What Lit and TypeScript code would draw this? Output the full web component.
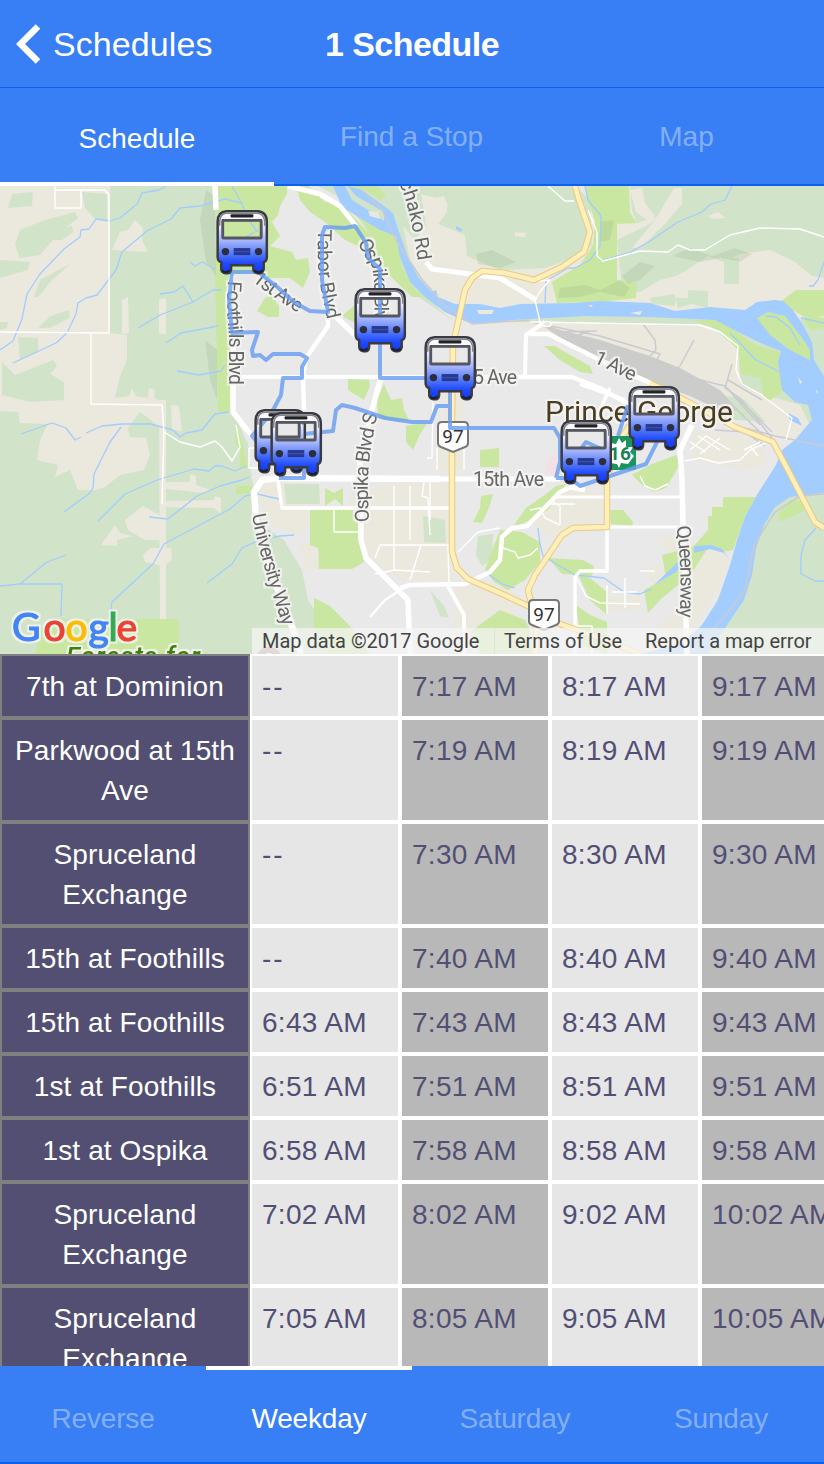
import { LitElement, html, svg, css } from 'lit';
import { customElement, property } from 'lit/decorators.js';
import { classMap } from 'lit/directives/class-map.js';

// Map geometry. All shapes share one coordinate space (y starts at 186).
const BEIGE = [
  '0,186 110,186 110,333 127,335 127,360 120,376 115,398 129,396 132,388 136,396 148,398 149,388 155,390 154,398 164,404 164,430 140,412 128,428 130,437 146,438 150,455 144,470 120,475 105,487 95,490 78,490 70,470 55,477 58,465 37,460 40,440 48,424 20,423 18,412 0,424',
  '112,250 120,232 128,230 135,220 143,228 142,240 148,252',
  '76,312 97,304 102,309 90,322 76,327',
  '122,300 128,297 129,333 122,334', '159,299 166,298 166,334 159,334',
  '159,400 166,400 166,619 160,619',
  '166,482 190,482 190,474 196,476 196,485 210,490 205,493 166,489',
  '166,501 214,500 215,496 221,498 221,514 214,508 166,507',
  '125,520 143,506 160,515 160,540 145,540 128,530',
  '101,545 115,525 120,533 133,536 117,540 117,546',
  '143,555 150,548 171,548 172,560 164,566 145,562',
  '171,405 179,406 182,431 172,430',
  '395,186 824,186 824,320 440,310 410,260',
];
const FOREST = [
  '0,260 30,262 28,270 0,278', '15,245 20,230 45,220 75,212 78,218 60,232 40,255 20,258',
  '12,194 33,192 32,206 8,208', '82,192 107,194 107,222 95,219 85,208',
  '46,240 60,228 72,226 73,232 62,240', '18,337 38,338 38,352 20,360', '0,322 8,322 7,328 0,330',
  '2,362 15,375 53,360 57,366 50,374 64,382 64,400 30,402 2,395',
  '38,328 50,316 69,310 70,318 50,328', '34,297 40,280 70,264 52,280 38,297', '0,411 18,412 15,424 0,424',
  '418,186 575,186 590,200 592,245 580,256 545,268 500,270 467,256 465,235 438,224 447,212 446,200 420,194',
  '375,186 420,186 426,225 415,240 402,225 390,200',
  '630,186 824,186 824,278 812,276 795,262 770,250 740,254 724,262 708,256 690,268 676,276 660,280 640,292 622,288 617,240 650,224 680,198 674,194 660,216 637,223 632,210',
  '724,258 739,258 739,284 724,284', '688,290 708,291 708,308 692,304 678,308 675,298 688,298', '650,298 675,294 675,306 652,304',
];
const BEIGE_OVER = [
  '630,190 642,188 645,203 655,216 650,222 636,212', '674,188 682,188 682,204 665,224 640,248 632,248 655,220',
  '708,216 718,212 726,218 712,219', '515,232 527,233 524,237 515,236', '420,202 444,196 448,206 440,212',
];
const URBAN = '233,272 262,230 272,220 280,186 318,186 345,200 368,232 395,270 420,298 455,322 530,323 600,350 680,390 735,420 810,425 778,465 760,490 742,515 735,560 715,605 700,630 680,645 650,654 345,654 325,625 308,600 302,570 284,540 262,525 252,480 248,444 233,412';
const URBAN_BEIGE = [
  '440,310 470,322 530,322 640,325 710,326 740,350 740,385 765,395 800,405 810,425 795,440 783,440 745,400 680,385 620,360 560,335 500,323 455,322',
  '254,478 300,482 302,508 350,508 350,488 372,490 400,480 456,482 454,640 490,654 520,600 510,586 480,584 400,580 364,556 362,510 312,510 309,525 298,535 284,530 272,525 258,500',
  '297,545 312,543 319,569 302,570 304,558',
  '560,482 590,490 606,500 606,520 585,525 562,540 548,535 530,520',
  '690,430 730,434 762,445 768,465 742,470 690,460',
  '600,598 640,594 640,610 605,612', '645,566 660,566 670,572 652,582 642,570', '690,560 715,550 730,540 728,570 700,620 660,654 640,654 680,600',
  '460,600 480,604 500,612 480,625 464,622', '445,388 464,388 464,470 436,470 434,452 445,440',
  '658,540 674,535 700,545 722,552 720,580 706,600 695,570 675,560',
];
const PARK = [
  '217,186 287,186 287,194 280,206 278,215 272,222 280,236 270,246 292,252 296,260 308,258 310,272 303,288 290,278 268,278 258,272 215,274',
  '215,273 233,276 232,412 218,412', '257,311 265,298 271,295 279,306 279,317 268,317',
  '296,186 308,186 325,202 340,202 351,214 368,232 385,252 400,272 421,297 412,297 390,276 370,252 358,246 345,240 325,222 310,212 300,200',
  '344,196 358,210 380,224 396,236 402,266 412,286 426,300 405,284 385,254 364,224 348,208', '346,186 378,186 386,196 380,200 365,190',
  '585,186 629,186 630,213 637,223 617,224 617,280 637,283 636,298 600,302 557,303 552,282 580,265 593,245 595,220 587,200',
  '342,316 356,304 360,308 357,324', '348,379 369,380 370,386 364,400 348,390',
  '377,400 384,384 391,400 402,398 404,410 409,420 400,422 378,418', '406,426 428,422 420,434 413,450 406,442',
  '480,450 499,448 499,467 480,467', '481,496 493,494 490,505 482,523 473,522 480,508',
  '310,510 362,510 362,548 364,562 352,569 319,569 318,548 310,545', '325,488 334,493 343,488 343,506 335,499 325,506',
  '314,598 330,606 350,626 370,654 330,654 314,625', '544,346 555,346 565,352 590,366 593,374 580,372 560,360',
  '556,486 566,484 548,510 535,518 512,528 526,508 546,494',
  '500,530 522,532 540,542 540,562 525,580 508,590 494,582 485,570 494,545', '548,558 583,560 594,566 592,576 562,574',
  '610,510 623,510 633,522 632,526 611,524', '632,475 652,464 676,455 680,464 666,488 654,492 642,485',
  '723,497 755,497 742,524 733,550 722,552 708,548 690,575 660,600 648,613 644,590 666,578 662,555 693,547 708,530 708,516 712,516 712,507 723,507',
  '578,574 590,578 607,592 607,615 590,600', '576,605 590,615 607,622 607,654 582,646',
  '692,320 720,320 755,345 780,352 778,365 786,390 770,400 764,398 760,378 740,374 738,350 720,330',
  '780,302 796,290 824,290 824,316 806,318',
  '236,420 242,442 248,468 240,468 240,448 235,444', '236,486 252,486 252,494 236,494',
  '40,628 60,619 179,619 179,654 36,654', '778,515 790,500 810,502 802,512 780,522', '500,610 525,620 530,630 532,654 480,654 470,632',
];
const WATER = [
  '348,186 362,190 380,203 393,213 399,232 408,257 418,277 432,292 436,290 438,297 455,304 480,304 500,308 520,304 575,303 600,301 650,303 675,311 710,307 745,310 757,302 775,300 783,301 793,310 803,325 812,342 814,360 824,376 824,493 790,497 775,507 764,525 756,548 752,575 744,600 725,628 708,654 640,654 682,644 702,625 718,600 730,565 737,540 746,515 760,490 776,465 782,450 795,440 805,428 812,420 808,405 795,402 782,390 778,362 781,351 765,345 738,332 715,320 650,317 585,316 512,320 480,324 467,322 445,312 425,297 410,282 400,257 396,236 380,230 360,218 342,207 333,186 345,186 352,200 370,211 384,221 384,212 370,204 356,196',
  '694,546 711,545 722,549 730,560 724,553 710,549 694,553', '678,562 690,552 690,560 676,572 654,585',
  '456,226 462,229 461,232 456,229', '788,413 798,418 802,426 790,420',
];
const ISLANDS = ['757,318 768,312 785,316 800,335 810,350 810,360 790,350 770,335', '802,314 824,318 824,328 810,330'];
const SANDBARS = ['368,211 378,212 380,219 370,216', '477,310 494,310 492,314 479,314', '630,313 642,311 640,315', '798,377 802,382 800,384', '816,389 818,392 817,394', '588,305 593,305 591,307'];
const SHADE = ['560,288 585,285 600,290 620,280 630,288 624,297 600,292 580,297 558,298', '622,276 640,262 655,266 640,280 628,284', '672,256 690,248 712,256 735,248 752,254 740,262 720,258 700,262', '476,254 492,250 516,262 500,268 478,264', '600,222 614,220 610,240 600,242', '206,190 215,196 216,276 206,262 200,220', '205,340 217,350 217,400 210,380'];

const STREAMS = [
  'M166 186 159 190 142 193 137 204 120 218 110 221 96 219 89 229 81 230 80 237 64 249 40 274 27 294 22 319 13 341 0 350',
  'M232 186 241 202 252 225 258 232 M258 230 244 238', 'M13 363 56 343 67 333 76 314 78 303 86 298 97 295 116 270 122 252 147 231 171 219 180 208 200 206 225 199 241 203',
  'M190 262 195 266 202 262 215 269', 'M160 294 174 292 183 286 193 302 213 290 222 290', 'M138 328 160 315 193 302', 'M166 343 181 333 218 326', 'M177 371 199 375 221 371 225 365',
  'M21 434 52 423 66 428 75 440 81 437', 'M86 433 102 426 122 424 150 424 173 430 180 437 186 433 202 430 215 414 229 412',
  'M121 427 110 442 94 474 93 488 90 493 64 512', 'M98 521 125 494 157 480 194 469 209 471 215 466 222 466 235 471 246 466',
  'M149 517 168 519 197 496 220 486 242 480 249 477', 'M110 617 112 602 153 564 164 544 230 509 245 496 257 494 279 499', 'M207 583 232 564 242 548 257 541 280 536 294 535',
  'M0 586 20 584 62 584 61 616', 'M20 584 47 562 66 555',
  'M585 186 588 200 601 216 600 246 590 260 575 268 568 268 546 281 545 303', 'M732 186 725 200 711 204 702 212 678 222 650 241 631 252 603 260',
  'M824 262 818 280 813 286 809 286', 'M538 528 540 544 543 556 575 575 604 578 624 592 640 594 652 589', 'M487 573 502 584 515 588', 'M816 528 805 540 801 555 801 574 815 581 824 581',
  'M730 333 756 360 780 372 790 378', 'M766 316 776 317 790 328 800 345', 'M801 318 824 323',
];
const RAILS = [
  'M362 190 382 210 396 240 421 278 445 306 472 324 500 322 530 320', 'M530 322 600 336 660 354 652 370 675 370 680 366 694 340',
  'M643 324 655 340 656 350 648 358', 'M732 364 725 388 740 398 772 438', 'M560 332 597 331 M570 338 590 331', 'M690 654 720 622 745 590 754 545 775 512 800 496 824 494', 'M745 428 775 436 824 446',
  'M680 375 725 386 760 425 M725 386 772 432 M722 395 768 440 M728 380 762 400', 'M715 430 745 432 765 446',
];
const THIN = [
  'M55 186 55 208 81 208 81 190 M55 190 105 190 109 195 109 333 0 332', 'M91 334 91 404 162 405 164 432 162 504', 'M164 432 180 442 200 447 215 441 222 447 232 461 240 447 236 425',
  'M249 448 256 448 M249 448 249 468 268 468', 'M538 281 550 280 541 290 535 300 540 322', 'M548 186 565 201 574 201', 'M588 210 597 232 597 256 603 261 640 251 668 252 678 245 690 250 705 250 730 235 760 228 800 229 824 237',
  'M530 322 700 325 720 332 738 346 736 370 742 384 760 394 792 418 786 440',
  'M334 508 334 532 358 532 M394 486 394 570 M410 486 410 540 M375 558 380 545 449 545 M375 574 395 570 430 572 M421 545 410 580 M430 482 430 520 M424 482 422 496 428 498 430 535',
  'M427 458 432 458 433 400 M450 390 464 392 M437 470 437 448 M464 448 464 470', 'M448 545 449 585', 'M458 552 478 532 500 528',
  'M530 510 540 508 545 518 560 525 M550 500 560 506 560 525 M550 504 575 504', 'M503 548 515 552 518 558 530 555 538 548',
  'M640 476 645 486 655 490 668 484', 'M690 450 706 436 730 450 M698 436 720 450 M690 442 706 452 M700 454 720 438', 'M685 461 700 458 718 463 740 460 750 450 768 442 M750 446 758 456 M744 450 760 442',
  'M576 577 586 596 600 603 640 604 M607 585 607 614 M625 578 625 608 M612 592 637 592', 'M640 571 655 571', 'M576 626 592 626 592 654',
];
const ROADS: [string, number][] = [
  ['M233 377 450 377', 4], ['M475 377 572 377 600 388 630 405', 4.5], ['M525 376 526 335 545 322', 4], ['M530 334 548 334 600 360 655 385', 4.5],
  ['M215 186 216 210 M232 275 228 300 233 340 233 412 247 430 258 442', 5.5], ['M301 654 290 620 270 570 256 520 254 492 262 480 280 478 440 479', 6.5],
  ['M430 479 560 479 M570 487 585 490', 5], ['M278 480 282 508 450 508', 3.5], ['M288 186 320 194 340 206 356 226', 5], ['M328 312 328 326 306 358 303 377 304 410', 4.5],
  ['M333 314 356 336 M381 377 372 410 M372 410 360 460 361 540 366 558 408 600 410 654', 5.5], ['M400 588 410 585 465 584 490 572 500 560 502 537 512 528 527 526 560 492 575 485', 4.5],
  ['M370 617 385 600 405 587', 2.5], ['M448 586 464 615 464 654', 4], ['M426 262 432 269 500 278 520 290 536 300', 5], ['M556 497 682 497 M608 527 690 527', 3],
  ['M607 527 607 571 580 571 575 577 575 654', 3.5], ['M692 425 680 450 682 480 683 525 687 654', 5.5], ['M580 384 625 400 M610 388 600 410 590 430', 3.5], ['M600 360 665 390', 4.5],
];
const HIGHWAY = 'M575 186 579 200 590 232 584 252 562 267 534 280 505 273 482 271 472 278 465 290 453 345 452 420 452 552 457 568 468 579 500 593 528 606 560 624 600 638 640 654 M607 475 607 527 573 528 562 535 535 575 528 590 532 606 M608 475 620 440 630 425 M536 620 536 654 M650 383 690 403 735 427 773 442 788 470 815 522 824 528';
const ROUTE = [
  'M232 272 258 272 275 285 295 303 310 311 328 312 322 280 322 235 325 227 345 228 355 226 366 243 368 258 380 269 380 378 450 378 450 428 554 428 560 438 560 462 556 478',
  'M232 272 229 300 232 333 258 332 252 350 253 356 260 355 266 360 273 354 300 354 307 358 302 367 302 378 283 378 281 395 272 412 252 436 257 442 257 416',
  'M449 406 437 406 431 422 412 422 385 418 355 408 342 405 336 410 333 431 304 434 304 478 279 478', 'M556 478 570 478 580 486 646 464 662 432', 'M628 405 618 436 M580 450 586 442 608 452',
];
const BUSES = [[217, 210], [355, 288], [425, 336], [629, 386], [561, 420], [255, 409], [271, 412]];

@customElement('bus-map')
class BusMap extends LitElement {
  static styles = css`
    :host { display: block; position: relative; height: 468px; overflow: hidden; }
    svg { display: block; width: 824px; height: 468px; font-family: Roboto, sans-serif; }
    .labels { filter: url(#halo); }
    .road-label { font-size: 19.5px; fill: #666; }
    .city { font-size: 30px; fill: #4a3d22; }
    .logo { font-family: Lato, sans-serif; font-size: 39px; stroke-width: 1.2px; }
    .forest-label { font-size: 26px; font-style: italic; font-weight: 500; fill: #3f7f0b; }
    .shield { font-size: 19px; fill: #333; text-anchor: middle; }
    .legal { position: absolute; right: 0; bottom: 0; width: 572px; height: 26px; box-sizing: border-box; padding-left: 10px; display: flex;
      font: 20px/27px Roboto, sans-serif; color: #444; background: rgba(245, 245, 245, .72); white-space: nowrap; }
    .legal span { box-sizing: border-box; letter-spacing: -.02px; }
    .data { width: 232px; }
    .terms { width: 142px; padding-left: 9px; border-left: 1px solid #dfe5d4; }
    .report { padding-left: 9px; }
  `;
  render() {
    const polys = (items: string[], fill: string) => items.map((p) => svg`<polygon points=${p} fill=${fill} />`);
    const lines = (items: string[], color: string, width: number) =>
      items.map((d) => svg`<path d=${d} fill="none" stroke=${color} stroke-width=${width} stroke-linejoin="round" />`);
    const letters: [string, number, string][] = [['G', 12, '#4285f4'], ['o', 43.5, '#ea4335'], ['o', 65.5, '#fbbc05'], ['g', 88.5, '#4285f4'], ['l', 108.5, '#34a853'], ['e', 116.5, '#ea4335']];
    return html`
      <svg viewBox="0 186 824 468">
        <defs>
          <filter id="halo" filterUnits="userSpaceOnUse" x="0" y="186" width="824" height="468" color-interpolation-filters="sRGB">
            <feMorphology in="SourceAlpha" operator="dilate" radius="2" result="grown" />
            <feGaussianBlur in="grown" stdDeviation=".6" result="soft" />
            <feFlood flood-color="#f4f4f1" flood-opacity=".85" />
            <feComposite in2="soft" operator="in" result="edge" />
            <feMerge><feMergeNode in="edge" /><feMergeNode in="SourceGraphic" /></feMerge>
          </filter>
          <linearGradient id="paint" x1="0" y1="0" x2="0" y2="1">
            <stop offset="0" stop-color="#fff" /><stop offset=".22" stop-color="#eef0ff" /><stop offset=".48" stop-color="#a3b4fb" /><stop offset=".7" stop-color="#4f74f9" /><stop offset=".84" stop-color="#204bff" /><stop offset="1" stop-color="#1038f0" />
          </linearGradient>
          <path id="tabor" d="M318 229 Q317 260 319 276 Q322 300 330 330" />
          <path id="foothills" d="M228 281 Q226 305 229 335 L229 400" />
          <path id="first" d="M252 281 Q272 297 308 319" />
          <path id="ospika" d="M358 242 Q363 256 371 264 Q376 275 374 345" />
          <path id="chako" d="M399 183 Q411 207 420 275" />
          <path id="ospikas" d="M369 522 L368 495 Q366 460 381 400" />
          <path id="university" d="M252 515 Q259 558 291 650" />
          <path id="queensway" d="M676 527 Q683 560 679 635" />
        </defs>
        <rect y="186" width="824" height="468" fill="#d1e4c9" />
        ${polys(BEIGE, '#ebe8de')}${polys(FOREST, '#d1e4c9')}${polys(BEIGE_OVER, '#ebe8de')}
        <polygon points=${URBAN} fill="#e9e9e9" />
        ${polys(URBAN_BEIGE, '#ebe8de')}
        ${polys(['284,484 319,484 320,504 286,504', '423,516 445,520 446,543 424,542', '478,536 493,534 492,560 482,566 476,555', '430,590 444,606 449,618 440,616'], '#d1e4c9')}
        ${polys(['546,460 556,454 558,476 545,474'], '#f3e1e6')}
        ${polys(PARK, '#c9e7a1')}
        <g opacity=".2">${polys(SHADE, '#8eab80')}</g>
        <polygon points="535,321 560,330 600,340 650,356 680,368 720,390 738,410 725,412 690,396 640,378 580,350" fill="#cccccb" />
        ${polys(WATER, '#a3ccff')}${polys(ISLANDS, '#c9e7a1')}${polys(SANDBARS, '#ebe8de')}
        ${lines(STREAMS, '#a3ccff', 1.3)}${lines(RAILS, '#cbcbcf', 1.5)}
        ${lines(THIN, '#fff', 1.4)}
        ${ROADS.map(([d, w]) => lines([d], '#fff', w))}
        ${lines([HIGHWAY], '#e8ca83', 6.5)}${lines([HIGHWAY], '#ffefb9', 4.5)}
        <ellipse cx="547" cy="324" rx="4" ry="2.5" fill="#ebe8de" stroke="#fff" stroke-width="1.5" />

        <g class="labels road-label">
          <text><textPath href="#tabor">Tabor Blvd</textPath></text>
          <text><textPath href="#foothills" textLength="104">Foothills Blvd</textPath></text>
          <text><textPath href="#first" textLength="56">1st Ave</textPath></text>
          <text><textPath href="#ospika" textLength="82">Ospika Blv</textPath></text>
          <text><textPath href="#chako">chako Rd</textPath></text>
          <text><textPath href="#ospikas" textLength="109">Ospika Blvd S</textPath></text>
          <text><textPath href="#university" textLength="116">University Way</textPath></text>
          <text><textPath href="#queensway" textLength="91">Queensway</textPath></text>
          <text x="473" y="384" textLength="44">5 Ave</text>
          <text x="473" y="486" textLength="71">15th Ave</text>
          <text transform="translate(593 362) rotate(26)" textLength="44">1 Ave</text>
        </g>
        <g class="labels"><text class="city" x="545" y="422" textLength="188">Prince George</text></g>

        <g stroke="#777" stroke-width="2" fill="#fff">
          <path d="M442 422 H464 Q468 422 468 426 V443 Q468 446 465 447 L453 452 441 447 Q438 446 438 443 V426 Q438 422 442 422Z" />
          <path d="M533 600 H555 Q559 600 559 604 V621 Q559 624 556 625 L544 630 532 625 Q529 624 529 621 V604 Q529 600 533 600Z" />
        </g>
        <text class="shield" x="453" y="443">97</text><text class="shield" x="544" y="621">97</text>
        <rect x="606" y="436" width="30" height="34" rx="2" fill="#1b9460" />
        <path d="M619 438 622 443 626 440 626 447 633 447 630 452 634 456 628 464 621 463 619 468 617 464 609 463 611 443 616 444Z" fill="#fff" />
        <text x="609" y="460" font-size="19" font-weight="700" fill="#168451">16</text>
        <g opacity=".82">${lines(ROUTE, '#6b9ef3', 4)}</g>

        ${BUSES.map(([x, y]) => svg`
          <g transform="translate(${x - 0.9} ${y - 0.3}) scale(1.035 1.01)">
            <path fill="url(#paint)" fill-rule="evenodd" stroke="#3a3a42" stroke-width="2.4" stroke-linejoin="round"
              d="M10 1.500H40Q49 2 49 12V47Q49 51 46 52V59Q45 63 42 63H40Q36 62 36 59V55H14.500V59Q14 63 11 63H9Q5 62 5 59V52Q1.500 51 1.500 47V12Q1.500 2 10 1.500ZM6.500 10.500V28H43.500V10.500Z" />
            <path d="M3.500 16V11Q4 4 10 3.500H40Q46 4 47 11V16" fill="none" stroke="#85858c" stroke-width="1.600" />
            <rect x="6.500" y="10.500" width="37" height="17.500" rx="1" fill="none" stroke="#55565f" stroke-width="2.400" />
            <rect x="14" y="4.500" width="22" height="3.200" rx="1" fill="#222" />
            <circle cx="9" cy="41.500" r="3.600" fill="#2c2d3d" /><circle cx="41" cy="41.500" r="3.600" fill="#2c2d3d" />
            <rect x="17" y="38" width="16" height="7" fill="#26398f" /><path d="M17 41.500H33" stroke="#3c55b4" />
            <path d="M6 60Q9 64 13 60M37 60Q41 64 45 60" stroke="#20202c" stroke-width="2" fill="none" />
          </g>`)}

        <g class="labels"><text class="forest-label" x="66" y="665" textLength="134">Forests for</text></g>
        <g class="labels"><text class="logo" y="640.5">${letters.map(([c, x, f]) => svg`<tspan x=${x} fill=${f} stroke=${f}>${c}</tspan>`)}</text></g>
        <circle cx="269" cy="660" r="13" fill="#b28d82" /><circle cx="269" cy="658" r="5" fill="#fff" />
      </svg>
      <div class="legal"><span class="data">Map data ©2017 Google</span><span class="terms">Terms of Use</span><span class="report">Report a map error</span></div>`;
  }
}

@customElement('tab-strip')
class TabStrip extends LitElement {
  @property({ attribute: false }) tabs: string[] = [];
  @property({ type: Number }) active = 0;
  @property({ type: Boolean, reflect: true }) footer = false;
  static styles = css`
    :host { display: flex; height: 98px; box-sizing: border-box; background: #387ef5; flex: none;
      box-shadow: inset 0 -2px #0c60ee; font-size: 28px; line-height: 40px; color: #fff; }
    .tab { flex: 1 1 0; box-sizing: border-box; text-align: center; padding-top: 29px; color: rgba(255, 255, 255, .4); }
    .on { color: #fff; border-bottom: 4px solid #fff; padding-top: 31px; }
    :host(:not([footer])) .on { flex: 0 0 274px; }
    :host([footer]) { letter-spacing: -.15px; }
    :host([footer]) .tab { padding-top: 33px; }
    :host([footer]) .on { border-bottom: 0; border-top: 4px solid #fff; padding-top: 29px; }
  `;
  render() {
    return this.tabs.map((t, i) => html`<div class=${classMap({ tab: true, on: i === this.active })}>${t}</div>`);
  }
}

const STOPS: [string, string[]][] = [
  ['7th at Dominion', ['--', '7:17 AM', '8:17 AM', '9:17 AM']],
  ['Parkwood at 15th Ave', ['--', '7:19 AM', '8:19 AM', '9:19 AM']],
  ['Spruceland Exchange', ['--', '7:30 AM', '8:30 AM', '9:30 AM']],
  ['15th at Foothills', ['--', '7:40 AM', '8:40 AM', '9:40 AM']],
  ['15th at Foothills', ['6:43 AM', '7:43 AM', '8:43 AM', '9:43 AM']],
  ['1st at Foothills', ['6:51 AM', '7:51 AM', '8:51 AM', '9:51 AM']],
  ['1st at Ospika', ['6:58 AM', '7:58 AM', '8:58 AM', '9:58 AM']],
  ['Spruceland Exchange', ['7:02 AM', '8:02 AM', '9:02 AM', '10:02 AM']],
  ['Spruceland Exchange', ['7:05 AM', '8:05 AM', '9:05 AM', '10:05 AM']],
];

@customElement('app-root')
class AppRoot extends LitElement {
  static styles = css`
    :host { display: flex; flex-direction: column; width: 824px; height: 1464px; overflow: hidden; background: #fff;
      font-family: "Liberation Sans", Arial, sans-serif; }
    header { display: grid; grid-template-columns: 1fr auto 1fr; align-items: center; height: 88px; box-sizing: border-box; flex: none;
      background: #387ef5; border-bottom: 1px solid #0c60ee; color: #fff; font-size: 34px; line-height: 86px; }
    .back { display: flex; align-items: center; gap: 12px; padding-left: 16px; letter-spacing: .08px; }
    .back svg { width: 25px; height: 40px; }
    .title { font-weight: 700; letter-spacing: -.55px; }
    bus-map { flex: none; }
    .times { flex: 1; min-height: 0; overflow: hidden; }
    .row { display: grid; grid-template-columns: 250px repeat(4, 150px); font-size: 28px; line-height: 40px; }
    .stop, .time { box-sizing: border-box; border: 2px solid #fff; padding: 11px 10px 9px; }
    .stop { border-color: #808080; background: #524f72; color: #fff; text-align: center; letter-spacing: .12px; }
    .time { background: #e6e6e6; color: #524f75; white-space: nowrap; letter-spacing: .3px; }
    .alt { background: #b8b8b8; }
    .none { letter-spacing: 2px; }
  `;
  render() {
    return html`
      <header>
        <div class="back"><svg viewBox="0 0 25 40"><path d="M22 2.500 4.500 20 22 37.500" fill="none" stroke="#fff" stroke-width="6.500" /></svg><span>Schedules</span></div>
        <div class="title">1 Schedule</div>
      </header>
      <tab-strip .tabs=${['Schedule', 'Find a Stop', 'Map']}></tab-strip>
      <bus-map></bus-map>
      <div class="times">
        ${STOPS.map(([name, times]) => html`<div class="row"><div class="stop">${name}</div>${times.map((t, i) => html`<div class=${classMap({ time: true, alt: i % 2 === 1, none: t === '--' })}>${t}</div>`)}</div>`)}
      </div>
      <tab-strip footer .tabs=${['Reverse', 'Weekday', 'Saturday', 'Sunday']} .active=${1}></tab-strip>`;
  }
}
